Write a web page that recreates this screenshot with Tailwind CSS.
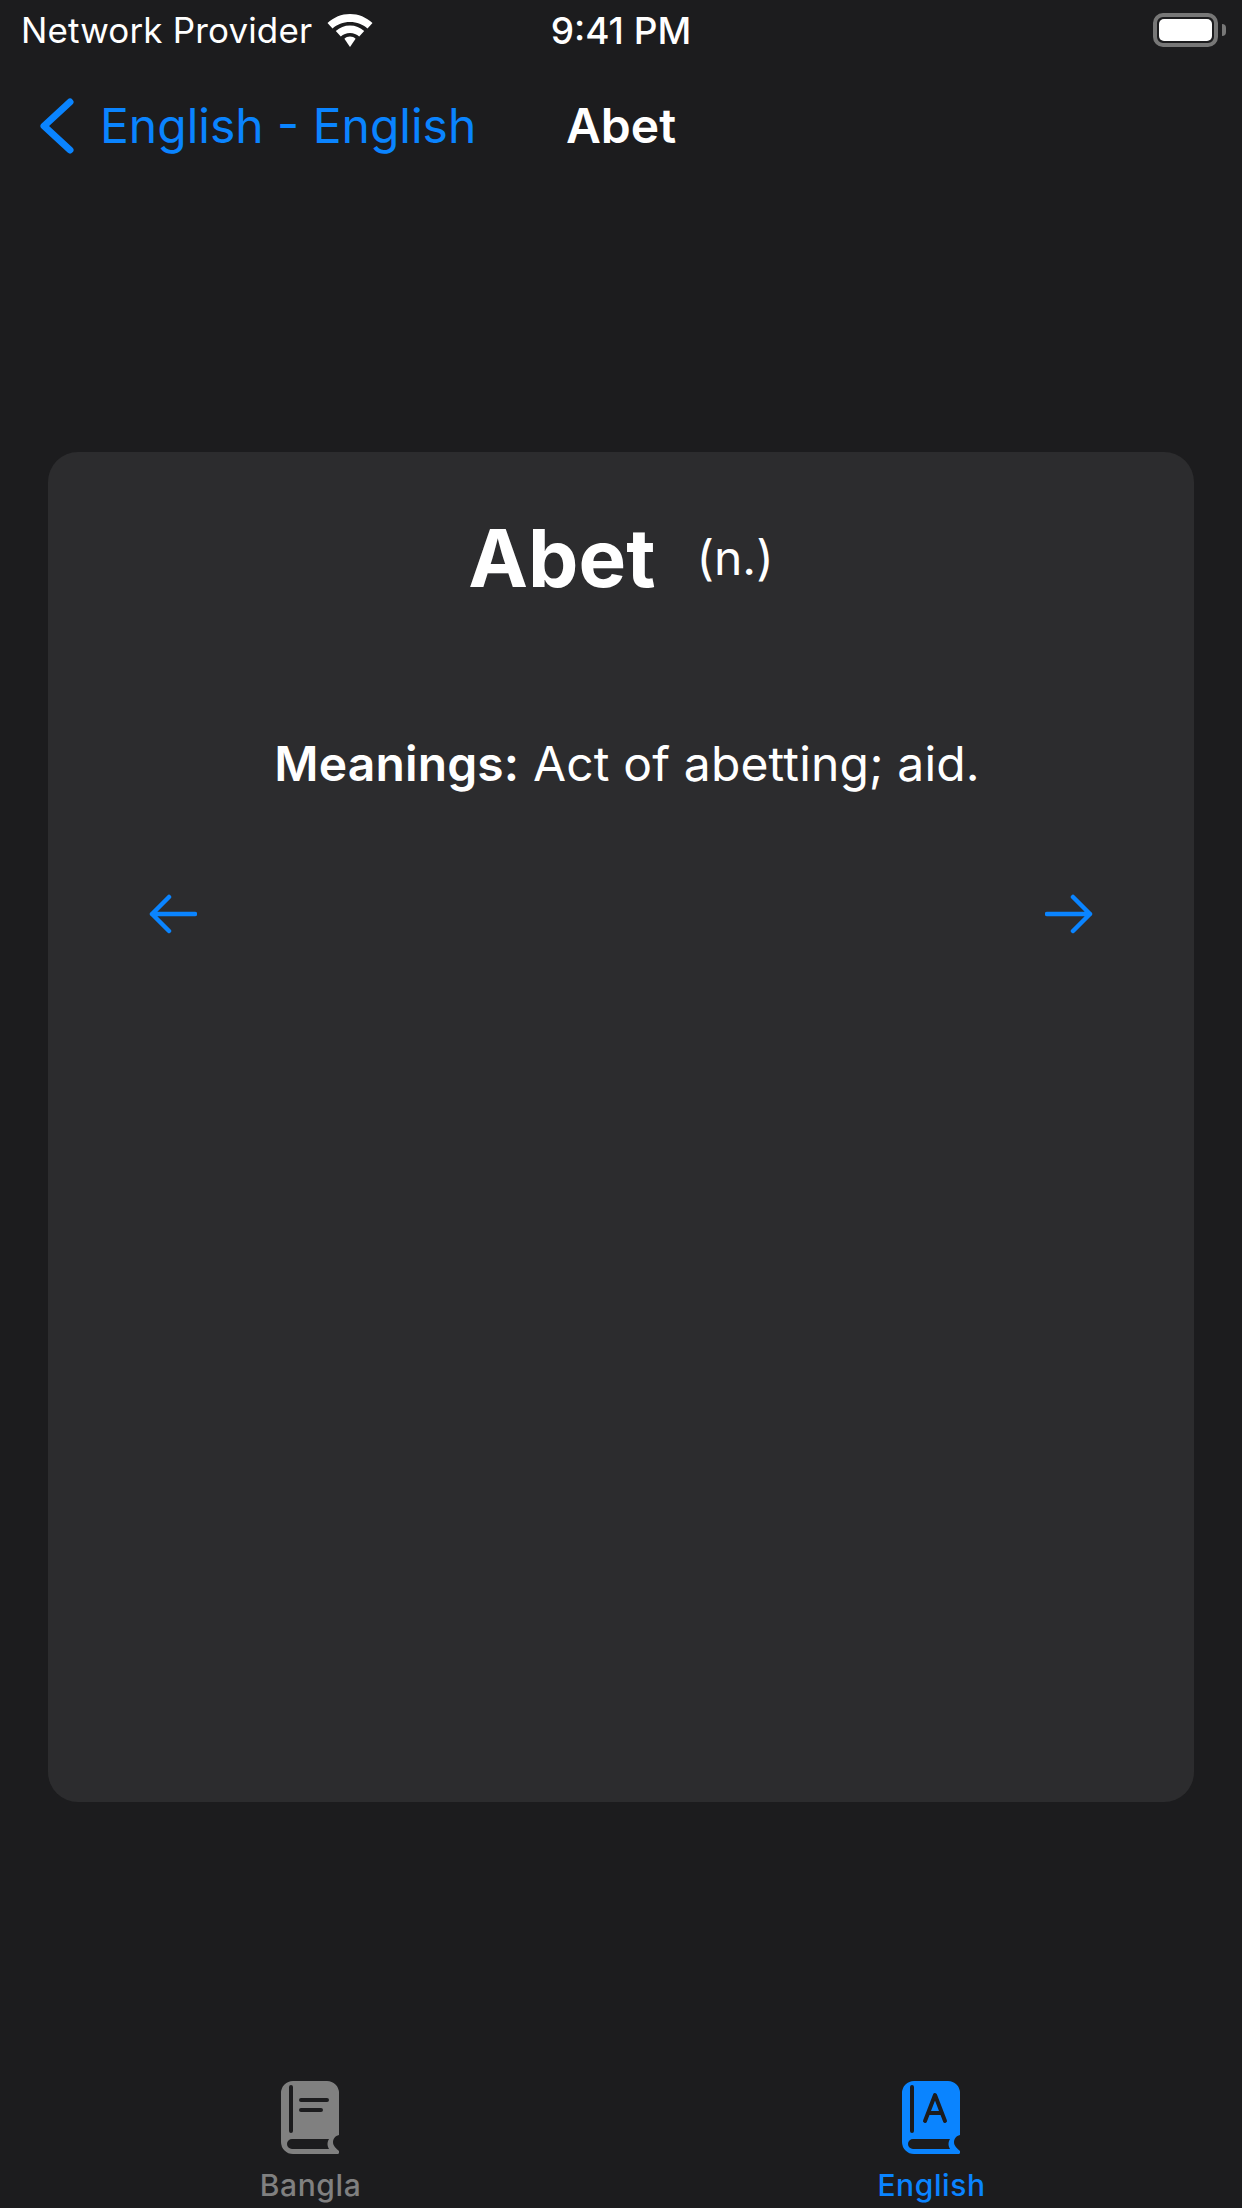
<!DOCTYPE html>
<html lang="en">
<head>
    <meta charset="UTF-8">
    <title>Abet</title>
    <script src="https://cdn.jsdelivr.net/npm/@tailwindcss/browser@4"></script>
</head>
<body class="bg-[#1c1c1e] font-['Inter',sans-serif] text-white">
    <div class="w-[1242px] h-[2208px] flex flex-col overflow-hidden">
        <!-- Status bar -->
        <div class="h-[60px] grid grid-cols-[1fr_auto_1fr] items-center px-[16px]">
            <div class="flex items-center gap-[15px] pl-[5px]">
                <span class="text-[35px] leading-none tracking-[0.15px]">Network Provider</span>
                <svg class="w-[46px] h-[33px]" viewBox="0 0 46 33" fill="#fff">
                    <path d="M23 0C14.500 0 6.700 3.300 .5 9L5.500 14.500C10 10.500 16 8 23 8S36 10.500 40.500 14.500L45.500 9C39.300 3.300 31.500 0 23 0Z"/>
                    <path d="M23 11.500C17.500 11.500 12.700 13.500 8.800 17L13.800 22.500C16.300 20.300 19.500 19 23 19S29.700 20.300 32.200 22.500L37.200 17C33.300 13.500 28.500 11.500 23 11.500Z"/>
                    <path d="M23 22.500C20.800 22.500 18.900 23.300 17.400 24.800L23 33L28.600 24.800C27.100 23.300 25.200 22.500 23 22.500Z"/>
                </svg>
            </div>
            <span class="text-[37px] leading-none font-medium">9:41 PM</span>
            <div class="flex items-center justify-end gap-[4px]">
                <div class="w-[65px] h-[34px] rounded-[10px] border-[4px] border-[#777] p-[2px]">
                    <div class="w-full h-full rounded-[5px] bg-white"></div>
                </div>
                <div class="w-[4px] h-[12px] rounded-r-full bg-[#777]"></div>
            </div>
        </div>

        <!-- Nav bar -->
        <div class="h-[132px] grid grid-cols-[1fr_auto_1fr] items-center">
            <div class="flex items-center gap-[26px] pl-[40px] text-[#0a84ff]">
                <svg class="w-[34px] h-[56px]" viewBox="0 0 34 56" fill="none" stroke="currentColor" stroke-width="7" stroke-linecap="round" stroke-linejoin="round">
                    <path d="M30 4L4 28L30 52"/>
                </svg>
                <span class="text-[48px] leading-none">English - English</span>
            </div>
            <span class="text-[48px] leading-none font-semibold">Abet</span>
        </div>

        <!-- Word card -->
        <div class="mt-[260px] mx-[48px] h-[1350px] rounded-[30px] bg-[#2c2c2e] flex flex-col items-center">
            <div class="mt-[60px] h-[92px] flex items-center gap-[41px]">
                <span class="text-[80px] leading-none font-bold">Abet</span>
                <span class="text-[48px] leading-none">(n.)</span>
            </div>
            <p class="mt-[136px] ml-[12px] text-[48px] leading-none tracking-[0.15px]"><span class="font-semibold">Meanings:</span> Act of abetting; aid.</p>
            <div class="mt-[106px] w-full px-[101px] flex justify-between text-[#0a84ff]">
                <svg class="w-[48px] h-[40px]" viewBox="0 0 48 40" fill="none" stroke="currentColor" stroke-width="4.500" stroke-linecap="round" stroke-linejoin="round">
                    <path d="M46 20H3M20 3L3 20L20 37"/>
                </svg>
                <svg class="w-[48px] h-[40px]" viewBox="0 0 48 40" fill="none" stroke="currentColor" stroke-width="4.500" stroke-linecap="round" stroke-linejoin="round">
                    <path d="M2 20H45M28 3L45 20L28 37"/>
                </svg>
            </div>
        </div>

        <!-- Tab bar -->
        <div class="mt-auto h-[127px] grid grid-cols-2">
            <div class="flex flex-col items-center text-[#808080]">
                <svg class="w-[58px] h-[73px] mr-[2px]" viewBox="0 0 58 73">
                    <path fill="currentColor" fill-rule="evenodd" d="M12 0H46A12 12 0 0 1 58 12V54C54 55 52 58 52 61C52 65 55 67 58 70A2 2 0 0 1 56 73H12A12 12 0 0 1 0 61V12A12 12 0 0 1 12 0ZM11 58A5 5 0 0 0 11 68H48C46 65 46 61 48 58Z"/>
                    <path d="M10 6V50M20 19H46M20 29H40" fill="none" stroke="#1c1c1e" stroke-width="4" stroke-linecap="round"/>
                </svg>
                <span class="mt-[16px] text-[30px] leading-none font-medium tracking-[0.6px]">Bangla</span>
            </div>
            <div class="flex flex-col items-center text-[#0a84ff]">
                <svg class="w-[58px] h-[73px] mr-[2px]" viewBox="0 0 58 73">
                    <path fill="currentColor" fill-rule="evenodd" d="M12 0H46A12 12 0 0 1 58 12V54C54 55 52 58 52 61C52 65 55 67 58 70A2 2 0 0 1 56 73H12A12 12 0 0 1 0 61V12A12 12 0 0 1 12 0ZM11 58A5 5 0 0 0 11 68H48C46 65 46 61 48 58Z"/>
                    <path d="M10 6V50M23 40L33 14L43 40M26 32H40" fill="none" stroke="#1c1c1e" stroke-width="4" stroke-linecap="round" stroke-linejoin="round"/>
                </svg>
                <span class="mt-[16px] text-[30px] leading-none font-medium tracking-[0.6px]">English</span>
            </div>
        </div>
    </div>
</body>
</html>
